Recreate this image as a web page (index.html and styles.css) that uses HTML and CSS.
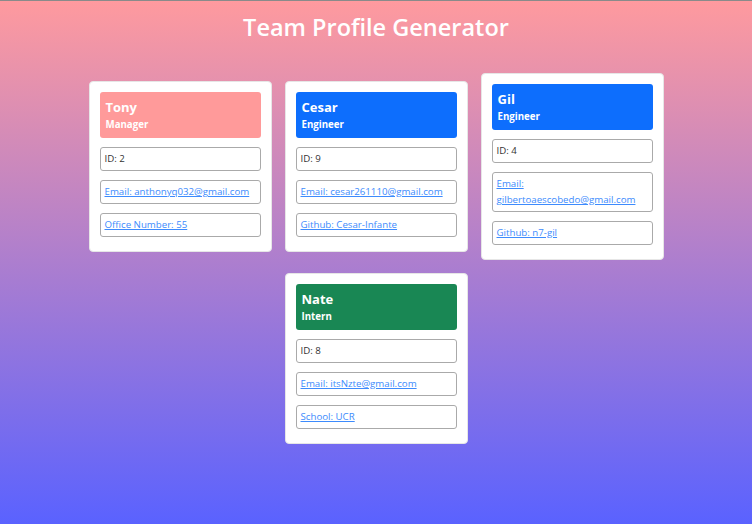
FILE: index.html
```html
<!DOCTYPE html>
<html lang="en">
<head>
<meta charset="utf-8">
<title>Team Profile Generator</title>
<link rel="stylesheet" href="styles.css">
</head>
<body>
<header class="page-header">
  <h1 class="title">Team Profile Generator</h1>
</header>
<main class="team">
  <section class="card">
    <div class="card-head manager">
      <h2 class="name">Tony</h2>
      <h3 class="role">Manager</h3>
    </div>
    <ul class="info">
      <li class="item">ID: 2</li>
      <li class="item"><a href="#">Email: anthonyq032@gmail.com</a></li>
      <li class="item"><a href="#">Office Number: 55</a></li>
    </ul>
  </section>
  <section class="card">
    <div class="card-head engineer">
      <h2 class="name">Cesar</h2>
      <h3 class="role">Engineer</h3>
    </div>
    <ul class="info">
      <li class="item">ID: 9</li>
      <li class="item"><a href="#">Email: cesar261110@gmail.com</a></li>
      <li class="item"><a href="#">Github: Cesar-Infante</a></li>
    </ul>
  </section>
  <section class="card">
    <div class="card-head engineer">
      <h2 class="name">Gil</h2>
      <h3 class="role">Engineer</h3>
    </div>
    <ul class="info">
      <li class="item">ID: 4</li>
      <li class="item"><a href="#">Email: gilbertoaescobedo@gmail.com</a></li>
      <li class="item"><a href="#">Github: n7-gil</a></li>
    </ul>
  </section>
  <section class="card">
    <div class="card-head intern">
      <h2 class="name">Nate</h2>
      <h3 class="role">Intern</h3>
    </div>
    <ul class="info">
      <li class="item">ID: 8</li>
      <li class="item"><a href="#">Email: itsNzte@gmail.com</a></li>
      <li class="item"><a href="#">School: UCR</a></li>
    </ul>
  </section>
</main>
</body>
</html>
```
FILE: styles.css
```css
html, body {
  margin: 0;
  padding: 0;
}
html {
  min-height: 100%;
  background: linear-gradient(180deg, #ff9a9e 0%, #5a62ff 100%);
}
body {
  min-height: 523px;
  border-top: 1px solid #8a8a8a;
  font-family: "Open Sans", "Noto Sans", sans-serif;
  font-size: 9.7px;
  color: #333;
}
.page-header {
  display: flex;
  justify-content: center;
  padding-top: 10px;
}
.title {
  margin: 0;
  font-size: 23.5px;
  font-weight: 600;
  line-height: 32px;
  color: #fff;
}
.team {
  margin: 30px auto 0;
  width: 600px;
  display: flex;
  flex-wrap: wrap;
  justify-content: center;
  align-items: center;
  gap: 13px;
}
.card {
  width: 183px;
  box-sizing: border-box;
  background: #fff;
  border-radius: 4px;
  border: 1px solid #e6e6e6;
  padding: 10px 10px 14px;
}
.card-head {
  border-radius: 3px;
  padding: 7px 6px 7px;
  color: #fff;
}
.manager { background: #ff9a9a; }
.engineer { background: #0d6efd; }
.intern { background: #198754; }
.name {
  margin: 0;
  font-size: 13px;
  font-weight: 700;
  line-height: 17px;
}
.role {
  margin: 2px 0 0;
  font-size: 9.7px;
  font-weight: 700;
  line-height: 13px;
}
.info {
  list-style: none;
  margin: 9px 0 0;
  padding: 0;
  display: flex;
  flex-direction: column;
  gap: 9px;
}
.item {
  border: 1px solid #aaa;
  border-radius: 3px;
  padding: 3px 4px;
  line-height: 16px;
}
.item a {
  color: #3d8bfd;
  text-decoration: underline;
}
```
